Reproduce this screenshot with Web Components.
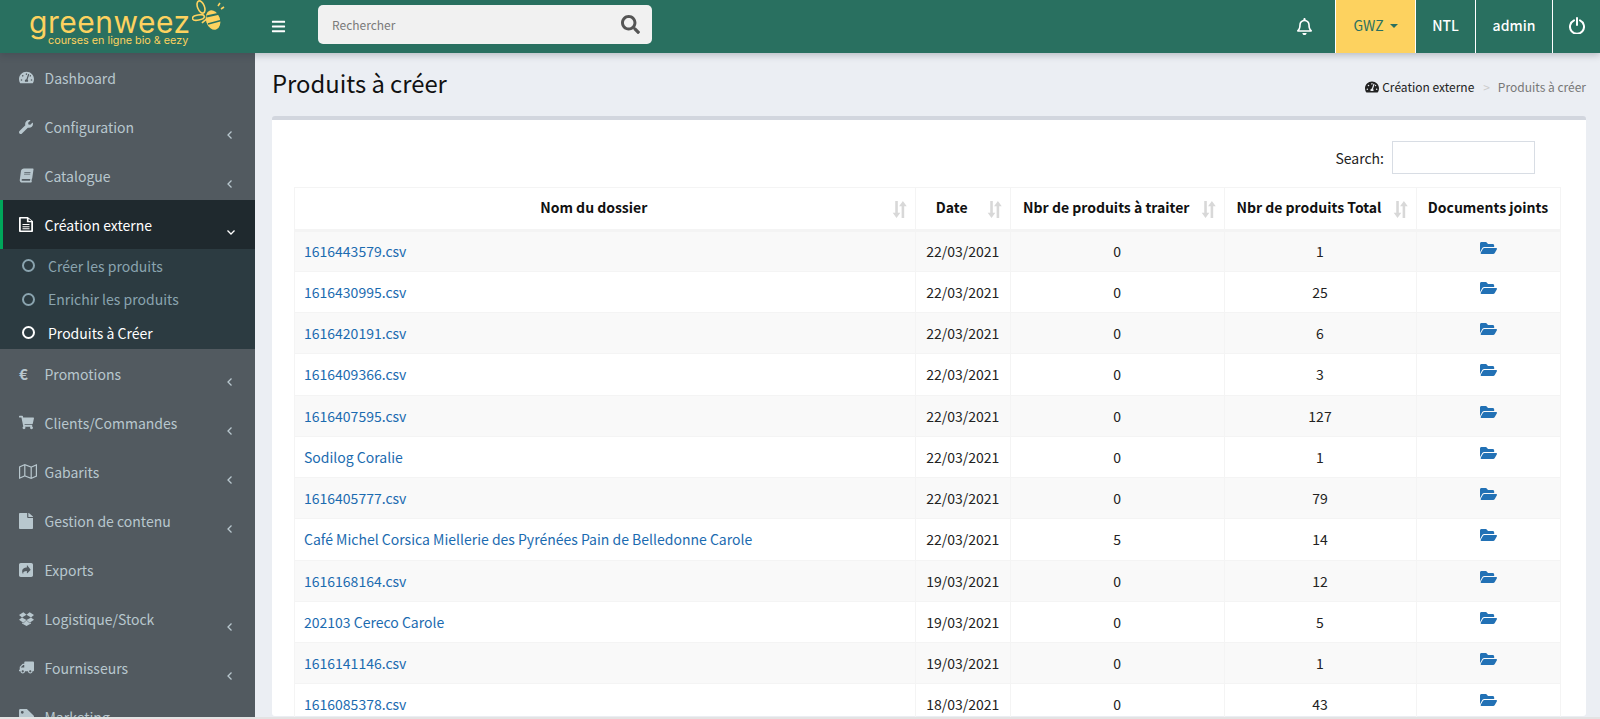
<!DOCTYPE html>
<html lang="fr">
<head>
<meta charset="utf-8">
<title>Produits à créer</title>
<style>
  html, body { margin: 0; height: 100%; overflow: hidden; }
  body { font-family: "Noto Sans CJK SC", "Noto Sans", sans-serif; font-size: 14px; color: #222; background: #ecf0f5; }
</style>
</head>
<body>

<gw-app>
  <gw-topbar slot="top"></gw-topbar>
  <gw-sidebar slot="side">
    <gw-nav-item icon="dashboard">Dashboard</gw-nav-item>
    <gw-nav-item icon="wrench" more>Configuration</gw-nav-item>
    <gw-nav-item icon="book" more>Catalogue</gw-nav-item>
    <gw-nav-item icon="filetext" open>Création externe</gw-nav-item>
    <gw-sub-menu>
      <gw-sub-item>Créer les produits</gw-sub-item>
      <gw-sub-item>Enrichir les produits</gw-sub-item>
      <gw-sub-item active>Produits à Créer</gw-sub-item>
    </gw-sub-menu>
    <gw-nav-item icon="euro" more>Promotions</gw-nav-item>
    <gw-nav-item icon="cart" more>Clients/Commandes</gw-nav-item>
    <gw-nav-item icon="map" more>Gabarits</gw-nav-item>
    <gw-nav-item icon="file" more>Gestion de contenu</gw-nav-item>
    <gw-nav-item icon="share">Exports</gw-nav-item>
    <gw-nav-item icon="dropbox" more>Logistique/Stock</gw-nav-item>
    <gw-nav-item icon="truck" more>Fournisseurs</gw-nav-item>
    <gw-nav-item icon="tag" more>Marketing</gw-nav-item>
  </gw-sidebar>
  <gw-content slot="main">
    <gw-page-head>Produits à créer</gw-page-head>
    <gw-box><gw-folder-table></gw-folder-table></gw-box>
  </gw-content>
</gw-app>

<script>
const ICONS = {
  search: ['0 0 512 512', 'M505 442.7L405.3 343c-4.5-4.5-10.6-7-17-7H372c27.6-35.3 44-79.7 44-128C416 93.1 322.9 0 208 0S0 93.1 0 208s93.1 208 208 208c48.3 0 92.7-16.4 128-44v16.3c0 6.4 2.5 12.5 7 17l99.7 99.7c9.4 9.4 24.6 9.4 33.9 0l28.3-28.3c9.4-9.4 9.4-24.6.1-34zM208 336c-70.7 0-128-57.2-128-128 0-70.7 57.2-128 128-128 70.7 0 128 57.2 128 128 0 70.7-57.2 128-128 128z'],
  bars: ['0 0 448 512', 'M16 132h416c8.837 0 16-7.163 16-16V76c0-8.837-7.163-16-16-16H16C7.163 60 0 67.163 0 76v40c0 8.837 7.163 16 16 16zm0 160h416c8.837 0 16-7.163 16-16v-40c0-8.837-7.163-16-16-16H16c-8.837 0-16 7.163-16 16v40c0 8.837 7.163 16 16 16zm0 160h416c8.837 0 16-7.163 16-16v-40c0-8.837-7.163-16-16-16H16c-8.837 0-16 7.163-16 16v40c0 8.837 7.163 16 16 16z'],
  bell: ['0 0 448 512', 'M439.39 362.29c-19.32-20.76-55.47-51.99-55.47-154.29 0-77.7-54.48-139.9-127.94-155.16V32c0-17.67-14.32-32-31.98-32s-31.98 14.33-31.98 32v20.84C118.56 68.1 64.08 130.3 64.08 208c0 102.3-36.15 133.53-55.47 154.29-6 6.45-8.66 14.16-8.61 21.71.11 16.4 12.98 32 32.1 32h383.8c19.12 0 32-15.6 32.1-32 .05-7.55-2.61-15.27-8.61-21.71zM67.53 368c21.22-27.97 44.42-74.33 44.53-159.42 0-.2-.06-.38-.06-.58 0-61.86 50.14-112 112-112s112 50.14 112 112c0 .2-.06.38-.06.58.11 85.1 23.31 131.46 44.53 159.42H67.53zM224 512c35.32 0 63.97-28.65 63.97-64H160.03c0 35.35 28.65 64 63.97 64z'],
  dashboard: ['0 0 576 512', 'M288 32C128.94 32 0 160.94 0 320c0 52.8 14.25 102.26 39.06 144.8 5.61 9.62 16.3 15.2 27.44 15.2h443c11.14 0 21.83-5.58 27.44-15.2C561.75 422.26 576 372.8 576 320c0-159.06-128.94-288-288-288zm0 64c14.71 0 26.58 10.13 30.32 23.65-1.11 2.26-2.64 4.23-3.45 6.67l-9.22 27.67c-5.13 3.49-10.97 6.01-17.64 6.01-17.67 0-32-14.33-32-32S270.33 96 288 96zM96 384c-17.67 0-32-14.33-32-32s14.33-32 32-32 32 14.33 32 32-14.33 32-32 32zm48-160c-17.67 0-32-14.33-32-32s14.33-32 32-32 32 14.33 32 32-14.33 32-32 32zm246.77-72.41l-61.33 184C343.13 347.33 352 364.54 352 384c0 11.72-3.38 22.55-8.88 32H232.88c-5.5-9.45-8.88-20.28-8.88-32 0-33.94 26.5-61.43 59.9-63.59l61.34-184.01c4.17-12.56 17.73-19.45 30.36-15.17 12.57 4.19 19.35 17.79 15.17 30.36zm14.66 57.2l15.52-46.55c3.47-1.29 7.13-2.23 11.05-2.23 17.67 0 32 14.33 32 32s-14.33 32-32 32c-11.38-.01-20.89-6.28-26.57-15.22zM480 384c-17.67 0-32-14.33-32-32s14.33-32 32-32 32 14.33 32 32-14.33 32-32 32z'],
  wrench: ['0 0 512 512', 'M507.73 109.1c-2.24-9.03-13.54-12.09-20.12-5.51l-74.36 74.36-67.88-11.31-11.31-67.88 74.36-74.36c6.62-6.62 3.43-17.9-5.66-20.16-47.38-11.74-99.55.91-136.58 37.93-39.64 39.64-50.55 97.1-34.05 147.2L18.74 402.76c-24.99 24.99-24.99 65.51 0 90.5 24.99 24.99 65.51 24.99 90.5 0l213.21-213.21c50.12 16.71 107.47 5.68 147.37-34.22 37.07-37.07 49.7-89.32 37.91-136.73z'],
  book: ['-50 0 548 512', 'M448 360V24c0-13.3-10.7-24-24-24H96C43 0 0 43 0 96v320c0 53 43 96 96 96h328c13.3 0 24-10.7 24-24v-16c0-7.5-3.5-14.3-8.9-18.7-4.2-15.4-4.2-59.3 0-74.7 5.4-4.3 8.9-11.1 8.9-18.6zM128 134c0-3.3 2.7-6 6-6h212c3.3 0 6 2.7 6 6v20c0 3.3-2.7 6-6 6H134c-3.3 0-6-2.7-6-6v-20zm0 64c0-3.3 2.7-6 6-6h212c3.3 0 6 2.7 6 6v20c0 3.3-2.7 6-6 6H134c-3.3 0-6-2.7-6-6v-20zm253.4 250H96c-17.7 0-32-14.3-32-32 0-17.6 14.4-32 32-32h285.4c-1.9 17.1-1.9 46.9 0 64z', 'skewX(-8deg)'],
  filetext: ['0 0 384 512', 'M24 0h216l144 144v344c0 13-11 24-24 24H24c-13 0-24-11-24-24V24C0 11 11 0 24 0zm24 48v416h288V176H216V48H48zm216 10v78h78zM96 240h192v36H96zm0 72h192v36H96zm0 72h192v36H96z'],
  file: ['0 0 384 512', 'M224 136V0H24C10.7 0 0 10.7 0 24v464c0 13.3 10.7 24 24 24h336c13.3 0 24-10.7 24-24V160H248c-13.2 0-24-10.8-24-24zm160-14.1v6.1H256V0h6.1c6.4 0 12.5 2.5 17 7l97.9 98c4.5 4.5 7 10.6 7 16.9z'],
  cart: ['0 0 576 512', 'M528.12 301.319l47.273-208C578.806 78.301 567.391 64 551.99 64H159.208l-9.166-44.81C147.758 8.021 137.93 0 126.529 0H24C10.745 0 0 10.745 0 24v16c0 13.255 10.745 24 24 24h69.883l70.248 343.435C147.325 417.1 136 435.222 136 456c0 30.928 25.072 56 56 56s56-25.072 56-56c0-15.674-6.447-29.835-16.824-40h209.647C430.447 426.165 424 440.326 424 456c0 30.928 25.072 56 56 56s56-25.072 56-56c0-22.172-12.888-41.332-31.579-50.405l5.517-24.276c3.413-15.018-8.002-29.319-23.403-29.319H218.117l-6.545-32h293.145c11.206 0 20.92-7.754 23.403-18.681z'],
  truck: ['0 0 640 512', 'M624 352h-16V243.9c0-12.7-5.1-24.9-14.1-33.9L494 110.1c-9-9-21.2-14.1-33.9-14.1H416V48c0-26.5-21.5-48-48-48H48C21.5 0 0 21.5 0 48v320c0 26.5 21.5 48 48 48h16c0 53 43 96 96 96s96-43 96-96h128c0 53 43 96 96 96s96-43 96-96h48c8.8 0 16-7.2 16-16v-32c0-8.8-7.2-16-16-16zM160 464c-26.5 0-48-21.5-48-48s21.5-48 48-48 48 21.5 48 48-21.5 48-48 48zm320 0c-26.5 0-48-21.5-48-48s21.5-48 48-48 48 21.5 48 48-21.5 48-48 48zm80-208H416V144h44.1l99.9 99.9V256z', 'scaleX(-1)'],
  folder: ['0 0 576 512', 'M572.694 292.093L500.27 416.248A63.997 63.997 0 0 1 444.989 448H45.025c-18.523 0-30.064-20.093-20.731-36.093l72.424-124.155A64 64 0 0 1 152 256h399.964c18.523 0 30.064 20.093 20.73 36.093zM152 224h328v-48c0-26.51-21.49-48-48-48H272l-64-64H48C21.49 64 0 85.49 0 112v278.046l69.077-118.418C86.214 242.25 117.989 224 152 224z'],
  map: ['0 0 18 15', 'M0 2.500L5.800 0l6.400 2.500L18 0v12.500L12.200 15l-6.400-2.500L0 15zM1.200 3.300v9.900l4-1.700V1.600zM6.400 1.500v10l5.200 2V3.500zM12.800 3.500v10l4-1.700V1.800z'],
  share: ['0 0 448 448', 'M56 0h336c31 0 56 25 56 56v336c0 31-25 56-56 56H56c-31 0-56-25-56-56V56C0 25 25 0 56 0zm196 84v62c-80 2-150 30-150 130 0 30 12 52 24 68 4 5 10 1 9-4-12-62 32-84 117-86v64c0 9 10 13 16 7l100-100c4-4 4-10 0-14L268 77c-6-6-16-2-16 7z'],
  dropbox: ['0 0 20 20', 'M5.800 1.500L0 5.300l4 3.200L10 5zM14.200 1.500L20 5.300l-4 3.200L10 5zM0 11.700l5.800 3.800L10 12 4 8.500zM20 11.700l-5.800 3.800L10 12l6-3.500zM10 12.800l-4.200 3.500L4 15.200v1.300L10 20l6-3.500v-1.300l-1.800 1.100z'],
  tag: ['0 0 512 512', 'M0 252V48C0 21 21 0 48 0h204c13 0 25 5 34 14l212 212c19 19 19 49 0 68L294 498c-19 19-49 19-68 0L14 286C5 277 0 265 0 252zM112 64a48 48 0 1 0 0 96 48 48 0 0 0 0-96z']
};

class GwIcon extends HTMLElement {
  connectedCallback() {
    const [box, d, tf] = ICONS[this.getAttribute('name')];
    const w = this.getAttribute('size') || 14;
    const h = this.getAttribute('h') || w;
    const fit = this.hasAttribute('h') ? 'none' : 'xMidYMid';
    this.attachShadow({mode: 'open'}).innerHTML = `
      <style>:host { display: inline-flex; line-height: 0; } svg { width: ${w}px; height: ${h}px; fill: currentColor; ${tf ? 'transform:' + tf : ''} }</style>
      <svg viewBox="${box}" preserveAspectRatio="${fit}" fill-rule="evenodd"><path d="${d}"/></svg>`;
  }
}
customElements.define('gw-icon', GwIcon);

class GwApp extends HTMLElement {
  constructor() {
    super();
    this.attachShadow({mode: 'open'}).innerHTML = `
      <style>
        :host { display: grid; grid-template-columns: 255px 1fr; grid-template-rows: 53px 1fr; height: 719px; overflow: hidden; position: relative; }
        .top { grid-column: 1 / 3; position: relative; z-index: 2; box-shadow: 0 2px 7px rgba(40,50,60,.28); }
        .side, .main { min-height: 0; overflow: hidden; }
        .foot { position: absolute; left: 0; right: 0; bottom: 0; height: 2px; background: #e3e3e3; }
      </style>
      <div class="top"><slot name="top"></slot></div>
      <div class="side"><slot name="side"></slot></div>
      <div class="main"><slot name="main"></slot></div>
      <div class="foot"></div>`;
  }
}
customElements.define('gw-app', GwApp);

class GwTopbar extends HTMLElement {
  constructor() {
    super();
    this.attachShadow({mode: 'open'}).innerHTML = `
      <style>
        :host { display: flex; height: 53px; background: #297060; color: #fff; align-items: stretch; }
        .logo { width: 255px; flex: none; box-sizing: border-box; padding-left: 29px; display: flex; gap: 1px; color: #fdd25f; overflow: hidden; }
        .txt { width: 162px; flex: none; }
        .word { font: 400 30px/28px Inter, sans-serif; letter-spacing: .5px; margin-top: 8px; height: 28px; white-space: nowrap; }
        .tag { font: 400 10.800px/10px Inter, sans-serif; padding-left: 19px; white-space: nowrap; }
        .bee { width: 33px; height: 32px; flex: none; }
        .toggle { margin-left: 16px; width: 47px; flex: none; display: flex; align-items: center; }
        .search { width: 334px; flex: none; margin: 5px 0 9px; background: #f1f1f1; border-radius: 5px; display: flex; align-items: center; padding: 0 12px 0 14px; box-sizing: border-box; }
        .search input { flex: 1; min-width: 0; border: 0; background: none; outline: 0; font: 12px "Noto Sans CJK SC", sans-serif; color: #333; padding: 0; }
        .search input::placeholder { color: #7a7a7a; opacity: 1; }
        .search gw-icon { color: #555; }
        .fill { flex: 1; }
        .bell { width: 62px; flex: none; display: flex; justify-content: center; align-items: center; margin-top: -1px; }
        .cell { flex: none; display: flex; align-items: center; justify-content: center; border-left: 1px solid #fff; box-sizing: border-box; font-size: 14px; font-weight: 500; padding-bottom: 3px; }
        .gwz { width: 80px; background: #fdd25f; color: #297060; font-weight: 400; gap: 6px; }
        .ntl { width: 60px; }
        .adm { width: 77px; }
        .pow { width: 48px; }
        .caret { width: 0; height: 0; border: 4.500px solid transparent; border-top-color: #297060; border-bottom: 0; margin-top: 2px; }
        .pow svg { width: 16px; height: 17px; fill: none; stroke: #fff; stroke-width: 2; stroke-linecap: round; }
      </style>
      <div class="logo">
        <div class="txt">
          <div class="word">greenweez</div>
          <div class="tag">courses en ligne bio &amp; eezy</div>
        </div>
        <svg class="bee" viewBox="0 0 33 32">
          <g fill="none" stroke="#fdd25f" stroke-width="1.600">
            <ellipse cx="9" cy="7" rx="3.400" ry="6.400" transform="rotate(-22 9 7)"/>
            <ellipse cx="6.400" cy="17.500" rx="6" ry="2.600" transform="rotate(-10 6.400 17.500)"/>
            <path d="M10 23c2-2.400 5-4 6-5M26 6l2-3M29 9l3-2"/>
          </g>
          <ellipse cx="21" cy="20" rx="7" ry="10" transform="rotate(-18 21 20)" fill="#fdd25f"/>
          <path d="M14.500 16.500l13.500-3M16 24l13-3.500" stroke="#297060" stroke-width="1.800"/>
        </svg>
      </div>
      <div class="toggle"><gw-icon name="bars" size="15"></gw-icon></div>
      <div class="search"><input placeholder="Rechercher"><gw-icon name="search" size="19"></gw-icon></div>
      <div class="fill"></div>
      <div class="bell"><gw-icon name="bell" size="17"></gw-icon></div>
      <div class="cell gwz">GWZ<span class="caret"></span></div>
      <div class="cell ntl">NTL</div>
      <div class="cell adm">admin</div>
      <div class="cell pow"><svg viewBox="0 0 16 17"><path d="M5 3.400a7 7 0 1 0 6 0M8 1v7"/></svg></div>`;
  }
}
customElements.define('gw-topbar', GwTopbar);

class GwSidebar extends HTMLElement {
  constructor() {
    super();
    this.attachShadow({mode: 'open'}).innerHTML = `
      <style>:host { display: block; background: #525a60; height: 100%; overflow: hidden; }</style>
      <slot></slot>`;
  }
}
customElements.define('gw-sidebar', GwSidebar);

// width, optional height per menu icon
const NAV_SIZES = { dashboard: [15], wrench: [14], book: [15], filetext: [14, 15], file: [14, 16], cart: [15], map: [18, 15], share: [14], dropbox: [15], truck: [15], tag: [15] };

class GwNavItem extends HTMLElement {
  connectedCallback() {
    const name = this.getAttribute('icon');
    const open = this.hasAttribute('open');
    const chevron = open
      ? '<svg class="ch" viewBox="0 0 10 10"><path d="M1.500 3.500L5 7l3.500-3.500"/></svg>'
      : this.hasAttribute('more') ? '<svg class="ch" viewBox="0 0 10 10"><path d="M6.500 1.500L3 5l3.500 3.500"/></svg>' : '';
    let icon = '<span class="euro">€</span>';
    if (name != 'euro') {
      const [w, h] = NAV_SIZES[name];
      icon = `<gw-icon name="${name}" size="${w}"${h ? ` h="${h}"` : ''}></gw-icon>`;
    }
    this.attachShadow({mode: 'open'}).innerHTML = `
      <style>
        :host { display: flex; align-items: center; height: 49px; box-sizing: border-box; padding: 0 0 0 19px; color: #b8c7ce; font-size: 14px; position: relative; }
        :host([open]) { background: #1f292e; color: #fff; border-left: 3px solid #00a65a; padding-left: 16px; }
        .i { width: 25.500px; flex: none; display: flex; align-items: center; }
        .euro { font-weight: 700; font-size: 15px; line-height: 15px; }
        .ch { position: absolute; left: 225px; top: 28px; width: 10px; height: 10px; fill: none; stroke: currentColor; stroke-width: 1.300; }
        :host([open]) .ch { left: 223px; top: 27px; }
      </style>
      <span class="i">${icon}</span><slot></slot>${chevron}`;
  }
}
customElements.define('gw-nav-item', GwNavItem);

class GwSubMenu extends HTMLElement {
  constructor() {
    super();
    this.attachShadow({mode: 'open'}).innerHTML = `
      <style>:host { display: block; background: #2c3b41; height: 100px; box-sizing: border-box; }</style>
      <slot></slot>`;
  }
}
customElements.define('gw-sub-menu', GwSubMenu);

class GwSubItem extends HTMLElement {
  constructor() {
    super();
    this.attachShadow({mode: 'open'}).innerHTML = `
      <style>
        :host { display: flex; align-items: center; height: 33.500px; padding-left: 22px; color: #8aa4af; font-size: 14px; }
        :host([active]) { color: #fff; }
        .o { width: 13px; height: 13px; box-sizing: border-box; border: 2.500px solid currentColor; border-radius: 50%; margin-right: 13px; flex: none; }
      </style>
      <span class="o"></span><slot></slot>`;
  }
}
customElements.define('gw-sub-item', GwSubItem);

class GwContent extends HTMLElement {
  constructor() {
    super();
    this.attachShadow({mode: 'open'}).innerHTML = `
      <style>:host { display: block; padding: 0 14px 0 17px; height: 100%; background: #ebeef3; }</style>
      <slot></slot>`;
  }
}
customElements.define('gw-content', GwContent);

class GwPageHead extends HTMLElement {
  constructor() {
    super();
    this.attachShadow({mode: 'open'}).innerHTML = `
      <style>
        :host { display: flex; height: 63px; align-items: center; justify-content: space-between; padding-bottom: 1px; box-sizing: border-box; }
        h1 { margin: 0; font-size: 23.800px; font-weight: 400; color: #111; line-height: 34px; margin-top: -2px; }
        nav { display: flex; align-items: center; font-size: 12px; color: #222; margin-top: 5px; }
        gw-icon { margin-right: 3px; }
        .sep { color: #ccc; margin: 0 8px 0 9px; font-size: 12px; width: 6.500px; }
        .now { color: #777; }
      </style>
      <h1><slot></slot></h1>
      <nav><gw-icon name="dashboard" size="14"></gw-icon>Création externe<span class="sep">&gt;</span><span class="now">Produits à créer</span></nav>`;
  }
}
customElements.define('gw-page-head', GwPageHead);

class GwBox extends HTMLElement {
  constructor() {
    super();
    this.attachShadow({mode: 'open'}).innerHTML = `
      <style>:host { display: block; background: #fff; border-top: 4px solid #d2d6de; border-radius: 3px; padding: 21px 25px 0 22px; height: 600px; box-sizing: border-box; }</style>
      <slot></slot>`;
  }
}
customElements.define('gw-box', GwBox);

const FOLDERS = [
  ['1616443579.csv', '22/03/2021', 0, 1],
  ['1616430995.csv', '22/03/2021', 0, 25],
  ['1616420191.csv', '22/03/2021', 0, 6],
  ['1616409366.csv', '22/03/2021', 0, 3],
  ['1616407595.csv', '22/03/2021', 0, 127],
  ['Sodilog Coralie', '22/03/2021', 0, 1],
  ['1616405777.csv', '22/03/2021', 0, 79],
  ['Café Michel Corsica Miellerie des Pyrénées Pain de Belledonne Carole', '22/03/2021', 5, 14],
  ['1616168164.csv', '19/03/2021', 0, 12],
  ['202103 Cereco Carole', '19/03/2021', 0, 5],
  ['1616141146.csv', '19/03/2021', 0, 1],
  ['1616085378.csv', '18/03/2021', 0, 43]
];

class GwFolderTable extends HTMLElement {
  constructor() {
    super();
    const sort = '<svg class="sort" viewBox="0 0 14 16"><path d="M3 0h2.400v11h2.400L4.200 16 .6 11H3zM9 16h2.400V5h2.400L10.200 0 6.600 5H9z"/></svg>';
    const head = ['Nom du dossier', 'Date', 'Nbr de produits à traiter', 'Nbr de produits Total']
      .map(t => `<th class="s"><span>${t}</span>${sort}</th>`).join('');
    const rows = FOLDERS.map(r => `
      <tr>
        <td class="name"><a href="#">${r[0]}</a></td>
        <td>${r[1]}</td><td>${r[2]}</td><td>${r[3]}</td>
        <td class="doc"><div class="ic"><gw-icon name="folder" size="17" h="16"></gw-icon></div></td>
      </tr>`).join('');
    this.attachShadow({mode: 'open'}).innerHTML = `
      <style>
        :host { display: block; font-size: 14px; }
        .filter { display: flex; justify-content: flex-end; align-items: center; gap: 8px; padding-right: 26px; height: 33px; margin-bottom: 13px; color: #222; }
        .filter input { width: 143px; height: 33px; box-sizing: border-box; border: 1px solid #d8dde4; outline: 0; padding: 0 6px; background: #fff; }
        table { width: 1265.500px; table-layout: fixed; border-collapse: collapse; border: 1px solid #f4f4f4; }
        th, td { border: 1px solid #f4f4f4; padding: 0 8px; text-align: center; color: #222; line-height: 20px; }
        th { height: 42.500px; font-weight: 700; color: #111; font-size: 14px; border-bottom: 3px solid #f4f4f4; position: relative; white-space: nowrap; padding-bottom: 2px; box-sizing: border-box; }
        th.s { padding-right: 30px; }
        .sort { position: absolute; right: 8px; top: 13px; width: 15px; height: 17px; fill: #d8d8d8; }
        td { height: 41.250px; box-sizing: border-box; }
        td.name { text-align: left; padding-left: 9px; }
        a { color: #1b6bb0; text-decoration: none; }
        tbody tr:nth-child(odd) td { background: #f9f9f9; }
        td.doc { color: #2271b5; vertical-align: top; padding-top: 8px; }
        .ic { display: flex; justify-content: center; height: 20px; }
      </style>
      <div class="filter"><label for="q">Search:</label><input id="q"></div>
      <table>
        <colgroup><col style="width:620.500px"><col style="width:95.500px"><col style="width:213.500px"><col style="width:192px"><col style="width:144px"></colgroup>
        <thead><tr>${head}<th>Documents joints</th></tr></thead>
        <tbody>${rows}</tbody>
      </table>`;
  }
}
customElements.define('gw-folder-table', GwFolderTable);
</script>
</body>
</html>
